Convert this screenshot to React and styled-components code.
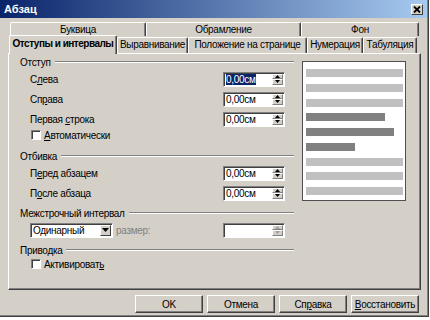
import styled, { createGlobalStyle } from "styled-components";

const GlobalStyle = createGlobalStyle`
  body {
    margin: 0;
    background: #ffffff;
    font-family: "Liberation Sans", Arial, sans-serif;
    font-size: 10px;
    letter-spacing: -0.3px;
    color: #000;
  }
`;

//  *** window ***
const Window = styled.div`
  width: 429px;
  height: 317px;
  box-sizing: border-box;
  background: #d4d0c8;
  border-right: 1px solid #404040;
  border-bottom: 1px solid #404040;
  box-shadow: inset -1px -1px 0 #808080;
  display: flex;
  flex-direction: column;
`;

const TitleBar = styled.div`
  height: 18px;
  margin-right: 1px;
  padding: 0 4px 0 4px;
  display: flex;
  align-items: center;
  justify-content: space-between;
  background: linear-gradient(to right, #0a246a, #a6caf0);
  color: #fff;
  font-weight: bold;
  font-size: 11px;
  letter-spacing: 0;
`;

const CloseButton = styled.div`
  width: 12px;
  height: 11px;
  box-sizing: border-box;
  background: #d4d0c8;
  border: 1px solid;
  border-color: #fff #404040 #404040 #fff;
  display: flex;
  align-items: center;
  justify-content: center;
`;

//  *** tabs ***
const BackRow = styled.div`
  display: flex;
  margin: 4px 0 0 10px;
  height: 14px;
`;

const BackTab = styled.div`
  width: ${(p) => p.$w}px;
  height: 14px;
  box-sizing: border-box;
  border-top: 1px solid #fff;
  border-left: 1px solid #fff;
  border-right: 1px solid #404040;
  box-shadow: inset -1px 0 0 #808080;
  border-radius: 2px 2px 0 0;
  text-align: center;
  line-height: 13px;
  white-space: nowrap;
`;

const FrontRow = styled.div`
  position: relative;
  z-index: 1;
  display: flex;
  align-items: flex-end;
  margin: -1px 0 0 9px;
  height: 18px;
`;

const FrontTab = styled.div`
  width: ${(p) => p.$w}px;
  height: ${(p) => (p.$active ? 19 : 16)}px;
  margin-bottom: ${(p) => (p.$active ? -1 : 0)}px;
  box-sizing: border-box;
  background: #d4d0c8;
  border-top: 1px solid #fff;
  border-left: 1px solid #fff;
  border-right: 1px solid #404040;
  box-shadow: inset -1px 0 0 #808080;
  border-radius: 2px 2px 0 0;
  text-align: center;
  white-space: nowrap;
  font-weight: ${(p) => (p.$active ? "bold" : "normal")};
  letter-spacing: ${(p) => (p.$active ? -0.5 : -0.3)}px;
  line-height: ${(p) => (p.$active ? 16 : 14)}px;
`;

//  *** panel ***
const Panel = styled.div`
  margin-left: 8px;
  width: 413px;
  height: 237px;
  box-sizing: border-box;
  border: 1px solid;
  border-color: #fff #404040 #404040 #fff;
  box-shadow: inset -1px -1px 0 #808080;
  padding: 1px 0 0 11px;
  display: flex;
`;

const LeftCol = styled.div`
  width: 274px;
  display: flex;
  flex-direction: column;
`;

const Section = styled.div`
  margin-top: ${(p) => p.$mt || 0}px;
`;

const SectionHeader = styled.div`
  height: 14px;
  display: flex;
  align-items: center;
  gap: 4px;
  white-space: nowrap;
`;

const EtchedLine = styled.div`
  flex: 1;
  height: 0;
  border-top: 1px solid #808080;
  border-bottom: 1px solid #fff;
`;

const Row = styled.div`
  height: ${(p) => p.$h || 20}px;
  display: flex;
  align-items: center;
  padding: 0 9px 0 ${(p) => p.$indent || 10}px;
  white-space: nowrap;
`;

const Label = styled.span`
  flex: 1;
  color: ${(p) => (p.$disabled ? "#808080" : "#000")};
`;

const SpinBox = styled.div`
  width: 62px;
  height: 15px;
  box-sizing: border-box;
  background: #fff;
  border: 1px solid;
  border-color: #808080 #fff #fff #808080;
  box-shadow: inset 1px 1px 0 #404040;
  display: flex;
`;

const SpinText = styled.div`
  flex: 1;
  padding: 1px 0 0 2px;
  line-height: 11px;
`;

const Selected = styled.span`
  background: #0a246a;
  color: #fff;
`;

const SpinButtons = styled.div`
  width: 11px;
  display: flex;
  flex-direction: column;
  margin: 1px 1px 1px 0;
`;

const SpinBtn = styled.div`
  flex: 1;
  box-sizing: border-box;
  background: #d4d0c8;
  border: 1px solid;
  border-color: #fff #808080 #808080 #fff;
  display: flex;
  align-items: center;
  justify-content: center;
`;

const Check = styled.div`
  width: 10px;
  height: 10px;
  box-sizing: border-box;
  background: #fff;
  border: 1px solid;
  border-color: #808080 #fff #fff #808080;
  box-shadow: inset 1px 1px 0 #404040;
  margin-right: 3px;
`;

const Combo = styled.div`
  width: 83px;
  height: 15px;
  box-sizing: border-box;
  background: #fff;
  border: 1px solid;
  border-color: #808080 #fff #fff #808080;
  box-shadow: inset 1px 1px 0 #404040;
  display: flex;
  margin-right: 3px;
`;

const ComboText = styled.div`
  flex: 1;
  padding: 1px 0 0 2px;
  line-height: 11px;
`;

const ComboBtn = styled.div`
  width: 11px;
  margin: 1px 1px 1px 0;
  box-sizing: border-box;
  background: #d4d0c8;
  border: 1px solid;
  border-color: #fff #404040 #404040 #fff;
  display: flex;
  align-items: center;
  justify-content: center;
`;

//  *** preview ***
const Preview = styled.div`
  margin: 6px 0 0 8px;
  width: 104px;
  height: 140px;
  box-sizing: border-box;
  background: #fff;
  border: 1px solid #505050;
  padding: 7px 0 0 3px;
  display: flex;
  flex-direction: column;
  gap: 6.75px;
`;

const Bar = styled.div`
  width: ${(p) => p.$w}px;
  height: 8px;
  background: ${(p) => (p.$dark ? "#808080" : "#c0c0c0")};
`;

//  *** buttons ***
const ButtonRow = styled.div`
  margin-top: 5px;
  display: flex;
  justify-content: flex-end;
  gap: 4px;
  padding-right: 9px;
`;

const Button = styled.div`
  width: 68px;
  height: 18px;
  box-sizing: border-box;
  border: 1px solid;
  border-color: #fff #404040 #404040 #fff;
  box-shadow: inset -1px -1px 0 #808080;
  display: flex;
  align-items: center;
  justify-content: center;
  white-space: nowrap;
`;

const Arrow = ({ up, color = "#000" }) => (
  <svg width="5" height="3" viewBox="0 0 5 3">
    <polygon points={up ? "0,3 5,3 2.5,0" : "0,0 5,0 2.5,3"} fill={color} />
  </svg>
);

function Spin({ selected, disabled }) {
  const c = disabled ? "#a0a0a0" : "#000";
  return (
    <SpinBox>
      <SpinText>{disabled ? "" : selected ? <Selected>0,00см</Selected> : "0,00см"}</SpinText>
      <SpinButtons>
        <SpinBtn><Arrow up color={c} /></SpinBtn>
        <SpinBtn><Arrow color={c} /></SpinBtn>
      </SpinButtons>
    </SpinBox>
  );
}

const backTabs = [
  { t: "Буквица", w: 136 },
  { t: "Обрамление", w: 155 },
  { t: "Фон", w: 118 },
];

const frontTabs = [
  { t: "Отступы и интервалы", w: 108, active: true },
  { t: "Выравнивание", w: 71 },
  { t: "Положение на странице", w: 119 },
  { t: "Нумерация", w: 56 },
  { t: "Табуляция", w: 54 },
];

const bars = [
  { w: 97 }, { w: 97 }, { w: 97 },
  { w: 79, dark: true }, { w: 88, dark: true }, { w: 49, dark: true },
  { w: 97 }, { w: 97 }, { w: 97 },
];

export default function App() {
  return (
    <>
      <GlobalStyle />
      <Window>
        <TitleBar>
          <span>Абзац</span>
          <CloseButton>
            <svg width="8" height="7" viewBox="0 0 8 7">
              <path d="M1 0.5 L7 6.5 M7 0.5 L1 6.5" stroke="#000" strokeWidth="1.8" />
            </svg>
          </CloseButton>
        </TitleBar>

        <BackRow>
          {backTabs.map((b) => (
            <BackTab key={b.t} $w={b.w}>{b.t}</BackTab>
          ))}
        </BackRow>
        <FrontRow>
          {frontTabs.map((f) => (
            <FrontTab key={f.t} $w={f.w} $active={f.active}>{f.t}</FrontTab>
          ))}
        </FrontRow>

        <Panel>
          <LeftCol>
            <Section>
              <SectionHeader>Отступ<EtchedLine /></SectionHeader>
              <Row><Label>С<u>л</u>ева</Label><Spin selected /></Row>
              <Row><Label>Сп<u>р</u>ава</Label><Spin /></Row>
              <Row><Label>Первая <u>с</u>трока</Label><Spin /></Row>
              <Row $h={12} $indent={11}><Check /><Label><u>А</u>втоматически</Label></Row>
            </Section>

            <Section $mt={8}>
              <SectionHeader>Отбивка<EtchedLine /></SectionHeader>
              <Row><Label>П<u>е</u>ред абзацем</Label><Spin /></Row>
              <Row><Label>П<u>о</u>сле абзаца</Label><Spin /></Row>
            </Section>

            <Section $mt={3}>
              <SectionHeader>Межстрочный интервал<EtchedLine /></SectionHeader>
              <Row>
                <Combo>
                  <ComboText>Одинарный</ComboText>
                  <ComboBtn><svg width="7" height="4" viewBox="0 0 7 4"><polygon points="0,0 7,0 3.5,4" fill="#000" /></svg></ComboBtn>
                </Combo>
                <Label $disabled>размер:</Label>
                <Spin disabled />
              </Row>
            </Section>

            <Section $mt={3}>
              <SectionHeader>Приводка<EtchedLine /></SectionHeader>
              <Row $h={14} $indent={11}><Check /><Label>Активироват<u>ь</u></Label></Row>
            </Section>
          </LeftCol>

          <Preview>
            {bars.map((b, i) => (
              <Bar key={i} $w={b.w} $dark={b.dark} />
            ))}
          </Preview>
        </Panel>

        <ButtonRow>
          <Button>OK</Button>
          <Button>Отмена</Button>
          <Button>Сп<u>р</u>авка</Button>
          <Button><u>В</u>осстановить</Button>
        </ButtonRow>
      </Window>
    </>
  );
}
